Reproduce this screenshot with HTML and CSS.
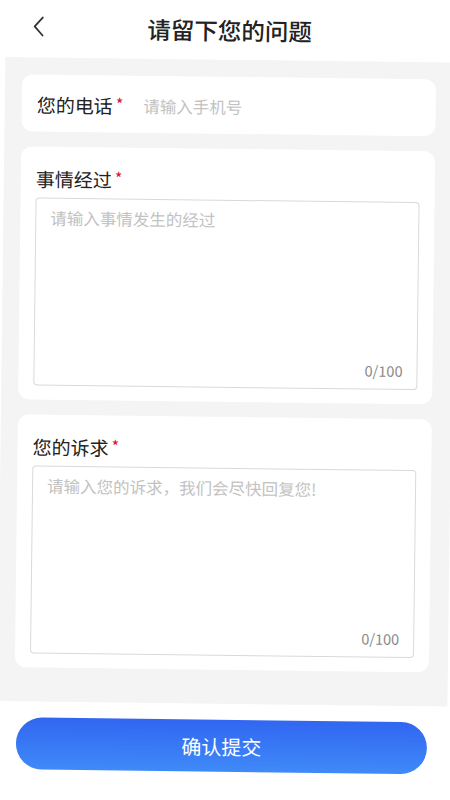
FILE: index.html
```html
<!DOCTYPE html>
<html>
<head lang="zh">
    <meta charset="UTF-8">
    <title>请留下您的问题</title>
    <link rel="stylesheet" href="styles.css">
</head>
<body>
<div class="page">
    <div class="header">
        <span class="back">
            <svg width="14" height="22" viewBox="0 0 14 22"><path d="M11 2 L3 11 L11 20" fill="none" stroke="#333" stroke-width="1.8" stroke-linecap="round" stroke-linejoin="round"/></svg>
        </span>
        <h1 class="title">请留下您的问题</h1>
    </div>

    <div class="main">
        <div class="card card-row">
            <label class="label">您的电话<i>*</i></label>
            <input class="phone" type="text" placeholder="请输入手机号">
        </div>

        <div class="card">
            <label class="label">事情经过<i>*</i></label>
            <div class="box">
                <textarea placeholder="请输入事情发生的经过"></textarea>
                <span class="count">0/100</span>
            </div>
        </div>

        <div class="card">
            <label class="label">您的诉求<i>*</i></label>
            <div class="box">
                <textarea placeholder="请输入您的诉求，我们会尽快回复您!"></textarea>
                <span class="count">0/100</span>
            </div>
        </div>
    </div>

    <button class="submit">确认提交</button>
</div>
</body>
</html>
```

FILE: styles.css
```css
body,div,ul,li,h1,p,input,button,textarea { margin:0; padding:0; }
body { background:#fff; color:#222; font-family: "Noto Sans CJK SC", "Noto Sans", sans-serif; overflow: hidden; }
i { font-style: normal; }

.page{
    width: 450px;
    height: 800px;
    transform: rotate(0.7deg);
    transform-origin: 0 0;
}

.header{
    height: 57px;
    display: flex;
    align-items: center;
    padding: 0 40px 0 32px;
    box-sizing: border-box;
}
.back{
    width: 18px;
    height: 22px;
    display: block;
    margin-top: -6px;
}
.title{
    flex: 1;
    text-align: center;
    font-size: 23.5px;
    font-weight: 500;
    color: #222;
    margin-top: -3px;
}

.main{
    width: 450px;
    margin-left: 6px;
    background: #f4f4f4;
    padding: 17px 19px 34px 17px;
    box-sizing: border-box;
    display: flex;
    flex-direction: column;
    gap: 15px;
}

.card{
    background: #fff;
    border-radius: 11px;
    padding: 20px 15px 14px;
    display: flex;
    flex-direction: column;
    gap: 6px;
}
.card-row{
    flex-direction: row;
    align-items: center;
    height: 57px;
    padding: 3px 15px 0;
    box-sizing: border-box;
    gap: 0;
}

.label{
    font-size: 19px;
    line-height: 24px;
    color: #222;
    white-space: nowrap;
}
.label i{
    color: #d4101e;
    font-size: 16px;
    margin-left: 3px;
    position: relative;
    top: -3px;
}

.phone{
    border: none;
    outline: none;
    margin-left: 20px;
    flex: 1;
    font-size: 16.5px;
    font-family: "Noto Sans CJK SC", sans-serif;
    color: #333;
    background: transparent;
}

.box{
    height: 188px;
    border: 1px solid #d9d9d9;
    border-radius: 4px;
    box-sizing: border-box;
    display: flex;
    flex-direction: column;
    padding: 8px 14px 9px;
}
.box textarea{
    flex: 1;
    border: none;
    outline: none;
    resize: none;
    font-size: 16.5px;
    line-height: 22px;
    font-family: "Noto Sans CJK SC", sans-serif;
    color: #333;
}
.count{
    align-self: flex-end;
    font-size: 14.5px;
    color: #8a8a8a;
    line-height: 18px;
}

input::placeholder, textarea::placeholder{
    color: #c2c2c2;
}

.submit{
    display: block;
    margin: 16px 0 0 25px;
    width: 411px;
    height: 52px;
    border: none;
    border-radius: 26px;
    background: linear-gradient(to bottom, #3166f1, #3f8af8);
    color: #fff;
    font-size: 20px;
    font-family: "Noto Sans CJK SC", sans-serif;
}
```
